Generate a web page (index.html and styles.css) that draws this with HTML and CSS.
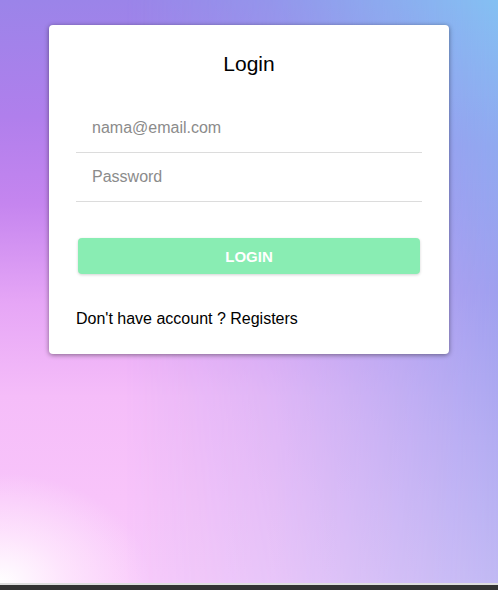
FILE: index.html
```html
<!DOCTYPE html>
<html lang="id">
<head>
<meta charset="utf-8">
<title>Login</title>
<link rel="stylesheet" href="styles.css">
</head>
<body>
<div class="screen">
  <div class="card">
    <h1 class="title">Login</h1>
    <form class="form">
      <input class="field" type="email" placeholder="nama@email.com">
      <input class="field" type="password" placeholder="Password">
      <button class="btn" type="button">LOGIN</button>
    </form>
    <p class="footer">Don't have account ? Registers</p>
  </div>
</div>
<div class="bottombar"></div>
</body>
</html>
```

FILE: styles.css
```css
html, body {
  margin: 0;
  padding: 0;
}
body {
  width: 498px;
  height: 590px;
  overflow: hidden;
  font-family: "Liberation Sans", Arial, sans-serif;
  background: #333;
}
.screen {
  position: relative;
  height: 583px;
  padding-top: 25px;
  box-sizing: border-box;
  background:
    radial-gradient(ellipse 150px 110px at 0% 100%, rgba(255,255,255,1) 0, rgba(255,238,253,0.7) 45%, rgba(255,225,250,0) 100%),
    linear-gradient(to bottom, #9b84e9 0%, #b07fec 20%, #c585ef 35%, #e6a6f6 52%, #f5bdf9 68%, #f8c4fa 85%, #f9cbfb 100%);
  display: flex;
  flex-direction: column;
  align-items: center;
}
.screen::before {
  content: "";
  position: absolute;
  inset: 0;
  background: linear-gradient(to bottom, #84c0f2 0%, #90a9f0 25%, #9fa0ef 50%, #b2acf2 75%, #c1b9f4 100%);
  -webkit-mask-image: linear-gradient(to right, rgba(0,0,0,0) 25%, rgba(0,0,0,0.3) 55%, #000 100%);
  mask-image: linear-gradient(to right, rgba(0,0,0,0) 25%, rgba(0,0,0,0.3) 55%, #000 100%);
}
.card {
  position: relative;
  z-index: 1;
  width: 400px;
  box-sizing: border-box;
  background: #fff;
  border-radius: 4px;
  box-shadow: 0 1px 5px rgba(0,0,0,0.45);
  padding: 26px 27px 25px;
}
.title {
  margin: 0 0 27px;
  text-align: center;
  font-size: 21px;
  line-height: 26px;
  font-weight: normal;
  color: #000;
}
.form {
  display: flex;
  flex-direction: column;
  margin: 0;
}
.field {
  height: 48px;
  padding: 0 16px;
  margin: 0;
  border: none;
  border-bottom: 1px solid #dcdcdc;
  font-family: "Liberation Sans", Arial, sans-serif;
  font-size: 16px;
  color: #333;
  outline: none;
  background: transparent;
}
.field::placeholder {
  color: #8b8b8b;
}
.btn {
  margin: 36px 2px 0;
  height: 36px;
  border: none;
  border-radius: 4px;
  background: #89edb3;
  color: #fff;
  font-family: "Liberation Sans", Arial, sans-serif;
  font-size: 15px;
  font-weight: bold;
  box-shadow: 0 1px 3px rgba(0,0,0,0.18);
  padding: 0;
}
.footer {
  margin: 35px 0 0;
  font-size: 16px;
  line-height: 20px;
  color: #000;
}
.bottombar {
  height: 7px;
  box-sizing: border-box;
  border-top: 2px solid #dedede;
  background: #333;
}
```
